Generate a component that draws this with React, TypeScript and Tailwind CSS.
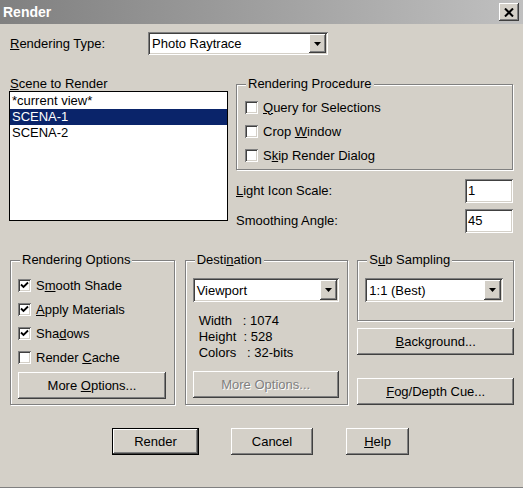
import React from "react";

/* classic win32 bevels */
const raised =
  "bg-[#d4d0c8] shadow-[inset_-1px_-1px_#404040,inset_1px_1px_#ffffff,inset_-2px_-2px_#808080,inset_2px_2px_#d4d0c8]";
const sunken =
  "bg-white shadow-[inset_1px_1px_#808080,inset_-1px_-1px_#ffffff,inset_2px_2px_#404040,inset_-2px_-2px_#d4d0c8]";

// Checkbox with label, optional checked mark
function Check({ checked, children }: { checked?: boolean; children: React.ReactNode }) {
  return (
    <div className="flex items-center h-[24px] gap-[5px]">
      <div className={`w-[13px] h-[13px] shrink-0 flex items-center justify-center ${sunken}`}>
        {checked && (
          <svg width="9" height="9" viewBox="0 0 9 9">
            <path d="M1 3.5 L3.5 6 L8 1.5" fill="none" stroke="#000" strokeWidth="1.8" />
          </svg>
        )}
      </div>
      <span className="leading-[15px]">{children}</span>
    </div>
  );
}

// Dropdown (combo box) with sunken field and arrow button
function Combo({ value, className }: { value: string; className: string }) {
  return (
    <div className={`flex items-center p-[2px] ${sunken} ${className}`}>
      <span className="flex-1 pl-[2px] leading-[15px]">{value}</span>
      <div className={`w-[17px] h-full flex items-center justify-center ${raised}`}>
        <svg width="7" height="4" viewBox="0 0 7 4">
          <path d="M0 0 H7 L3.5 4 Z" fill="#000" />
        </svg>
      </div>
    </div>
  );
}

// Etched group box with caption over its top edge
function Group({ title, className, children }: { title: React.ReactNode; className: string; children?: React.ReactNode }) {
  return (
    <div className={`relative border border-[#808080] shadow-[1px_1px_0_#ffffff,inset_1px_1px_0_#ffffff] ${className}`}>
      <span className="absolute -top-[9px] left-[9px] px-[2px] bg-[#d4d0c8] leading-[16px]">{title}</span>
      {children}
    </div>
  );
}

function Button({ children, className, disabled }: { children: React.ReactNode; className: string; disabled?: boolean }) {
  return (
    <div className={`flex items-center justify-center ${raised} ${className}`}>
      <span className={disabled ? "text-[#808080] [text-shadow:1px_1px_0_#ffffff]" : ""}>{children}</span>
    </div>
  );
}

export default function App() {
  return (
    <div className="w-[523px] h-[488px] bg-[#d4d0c8] border-b border-[#808080] flex flex-col text-[13px] text-black font-['Liberation_Sans',Arial,sans-serif] overflow-hidden">
      {/* Title bar */}
      <div className="h-[24px] shrink-0 flex items-center justify-between pl-[3px] pr-[4px] bg-gradient-to-r from-[#808080] to-[#c0c0c0]">
        <span className="text-white font-bold text-[14px]">Render</span>
        <div className={`w-[20px] h-[18px] flex items-center justify-center ${raised}`}>
          <svg width="10" height="9" viewBox="0 0 10 9">
            <path d="M1 0.5 L9 8.5 M9 0.5 L1 8.5" stroke="#000" strokeWidth="2" />
          </svg>
        </div>
      </div>

      <div className="flex flex-col px-[9px]">
        {/* Rendering type */}
        <div className="flex items-center mt-[8px]">
          <span className="w-[139px] pl-[1px]">
            <u>R</u>endering Type:
          </span>
          <Combo value="Photo Raytrace" className="w-[180px] h-[23px]" />
        </div>

        {/* Scene list + procedure */}
        <div className="flex mt-[21px]">
          <div className="w-[219px] flex flex-col">
            <span className="h-[15px] leading-[15px] pl-[1px]">
              <u>S</u>cene to Render
            </span>
            <div className="h-[130px] bg-white border border-black pt-[1px] flex flex-col">
              <div className="h-[16px] leading-[16px] pl-[2px]">*current view*</div>
              <div className="h-[16px] leading-[16px] pl-[2px] bg-[#0a246a] text-white">SCENA-1</div>
              <div className="h-[16px] leading-[16px] pl-[2px]">SCENA-2</div>
            </div>
          </div>

          <div className="w-[277px] ml-[8px] flex flex-col">
            <Group title="Rendering Procedure" className="mt-[8px] h-[86px] pt-[10px] pl-[8px]">
              <Check>
                <u>Q</u>uery for Selections
              </Check>
              <Check>
                Crop <u>W</u>indow
              </Check>
              <Check>
                S<u>k</u>ip Render Dialog
              </Check>
            </Group>
            <div className="flex items-center justify-between mt-[9px]">
              <span>
                <u>L</u>ight Icon Scale:
              </span>
              <div className={`w-[48px] h-[24px] pl-[3px] flex items-center ${sunken}`}>1</div>
            </div>
            <div className="flex items-center justify-between mt-[6px]">
              <span>
                Smoothin<u>g</u> Angle:
              </span>
              <div className={`w-[48px] h-[24px] pl-[3px] flex items-center ${sunken}`}>45</div>
            </div>
          </div>
        </div>

        {/* Options row */}
        <div className="flex mt-[27px] ml-[1px]">
          <Group title="Rendering Options" className="w-[165px] h-[145px] pt-[12px] pl-[7px]">
            <Check checked>
              S<u>m</u>ooth Shade
            </Check>
            <Check checked>
              <u>A</u>pply Materials
            </Check>
            <Check checked>
              Sha<u>d</u>ows
            </Check>
            <Check>
              Render <u>C</u>ache
            </Check>
            <Button className="w-[148px] h-[27px] mt-[3px]">
              More <u>O</u>ptions...
            </Button>
          </Group>

          <Group
            title={
              <>
                Desti<u>n</u>ation
              </>
            }
            className="w-[164px] h-[145px] ml-[10px] pt-[17px] pl-[7px]"
          >
            <Combo value="Viewport" className="w-[146px] h-[24px]" />
            <div className="mt-[11px] ml-[6px] leading-[16px] whitespace-pre">
              <div>Width   : 1074</div>
              <div>Height  : 528</div>
              <div>Colors   : 32-bits</div>
            </div>
            <Button disabled className="w-[146px] h-[27px] mt-[10px]">
              More Options...
            </Button>
          </Group>

          <div className="w-[157px] ml-[9px] flex flex-col">
            <Group
              title={
                <>
                  S<u>u</u>b Sampling
                </>
              }
              className="h-[61px] pt-[17px] pl-[7px]"
            >
              <Combo value="1:1 (Best)" className="w-[138px] h-[24px]" />
            </Group>
            <Button className="h-[27px] mt-[7px]">
              <u>B</u>ackground...
            </Button>
            <Button className="h-[27px] mt-[23px]">
              <u>F</u>og/Depth Cue...
            </Button>
          </div>
        </div>

        {/* Dialog buttons */}
        <div className="flex mt-[23px] ml-[103px]">
          <div className="w-[87px] h-[27px] border border-black">
            <Button className="w-full h-full">Render</Button>
          </div>
          <Button className="w-[82px] h-[27px] ml-[32px]">Cancel</Button>
          <Button className="w-[63px] h-[27px] ml-[33px]">
            <u>H</u>elp
          </Button>
        </div>
      </div>
    </div>
  );
}
